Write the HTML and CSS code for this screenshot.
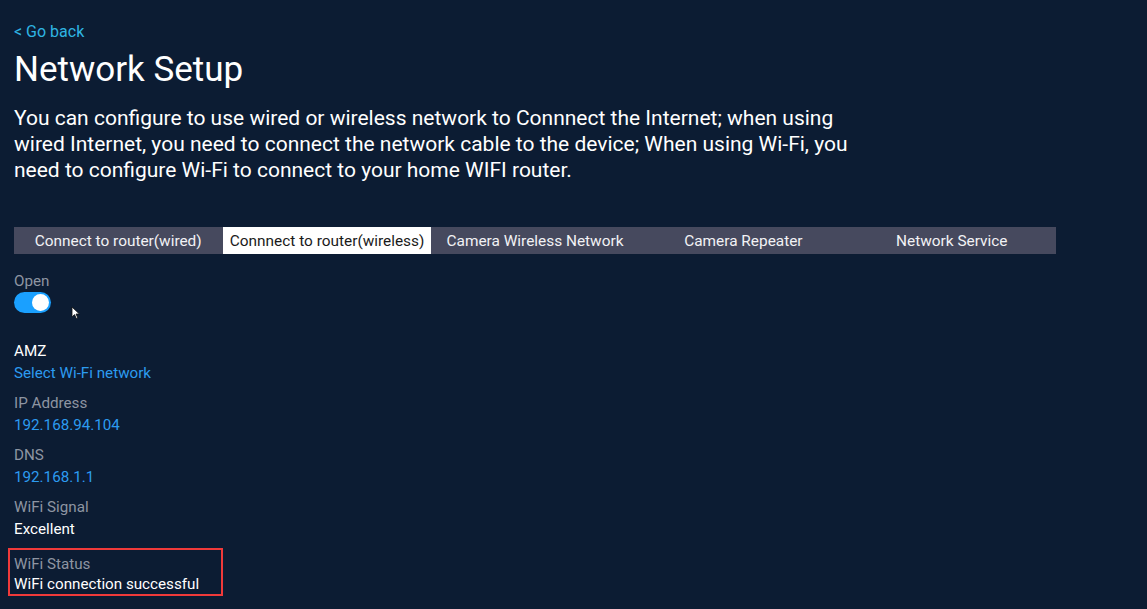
FILE: index.html
```html
<!DOCTYPE html>
<html>
<head>
<meta charset="utf-8">
<link rel="stylesheet" href="styles.css">
</head>
<body>
<div class="page">
  <a class="back">&lt; Go back</a>
  <h1 class="title">Network Setup</h1>
  <p class="intro">You can configure to use wired or wireless network to Connnect the Internet; when using wired Internet, you need to connect the network cable to the device; When using Wi-Fi, you need to configure Wi-Fi to connect to your home WIFI router.</p>
  <div class="tabs">
    <div class="tab">Connect to router(wired)</div>
    <div class="tab active">Connnect to router(wireless)</div>
    <div class="tab">Camera Wireless Network</div>
    <div class="tab">Camera Repeater</div>
    <div class="tab">Network Service</div>
  </div>
  <div class="field toggle-field">
    <div class="label">Open</div>
    <div class="toggle-row">
      <div class="toggle"><div class="knob"></div></div>
      <svg class="cursor" width="10" height="14" viewBox="0 0 10 14"><path d="M1 1 L1 11 L3.5 8.6 L5.4 12.6 L6.8 12 L5 8 L8.4 8 Z" fill="#fff" stroke="#111" stroke-width="0.8"/></svg>
    </div>
  </div>
  <div class="field">
    <div class="value white">AMZ</div>
    <div class="value blue">Select Wi-Fi network</div>
  </div>
  <div class="field">
    <div class="label">IP Address</div>
    <div class="value blue">192.168.94.104</div>
  </div>
  <div class="field">
    <div class="label">DNS</div>
    <div class="value blue">192.168.1.1</div>
  </div>
  <div class="field">
    <div class="label">WiFi Signal</div>
    <div class="value white">Excellent</div>
  </div>
  <div class="field highlight">
    <div class="label">WiFi Status</div>
    <div class="value white">WiFi connection successful</div>
  </div>
</div>
</body>
</html>
```
FILE: styles.css
```css
html, body {
  margin: 0;
  padding: 0;
  background: #0c1c33;
  height: 100%;
  overflow: hidden;
}
body {
  font-family: Roboto, "Noto Sans", sans-serif;
  color: #ffffff;
}
.page {
  padding: 21px 14px 0 14px;
}
.back {
  display: block;
  color: #2fb5e2;
  font-size: 16px;
  line-height: 22px;
}
.title {
  margin: 7px 0 0 0;
  font-size: 35px;
  font-weight: 400;
  line-height: 40px;
  color: #ffffff;
}
.intro {
  margin: 15px 0 0 0;
  font-size: 21px;
  line-height: 26px;
  max-width: 860px;
  color: #ffffff;
}
.tabs {
  margin-top: 44px;
  display: grid;
  grid-template-columns: repeat(5, 1fr);
  width: 1042px;
  height: 27px;
  background: #46495e;
}
.tab {
  display: flex;
  align-items: center;
  justify-content: center;
  font-size: 15.4px;
  color: #f2f2f5;
}
.tab.active {
  background: #ffffff;
  color: #1a1a1a;
  margin-left: 1px;
}
.field {
  display: flex;
  flex-direction: column;
  margin-top: 8px;
}
.toggle-field {
  margin-top: 16px;
}
.label {
  font-size: 15.2px;
  line-height: 22px;
  color: #8e95a2;
}
.value {
  font-size: 15.2px;
  line-height: 22px;
}
.white { color: #ffffff; }
.blue { color: #2c9bf0; }
.toggle-row {
  display: flex;
  align-items: flex-start;
  gap: 20px;
  height: 22px;
  margin-bottom: 18px;
}
.toggle {
  width: 37px;
  height: 21px;
  border-radius: 11px;
  background: #1aa0ff;
  position: relative;
}
.knob {
  position: absolute;
  right: 2px;
  top: 2px;
  width: 17px;
  height: 17px;
  border-radius: 50%;
  background: #ffffff;
}
.cursor {
  margin-top: 14px;
}
.highlight {
  width: fit-content;
  margin-left: -6px;
  margin-top: 8px;
  padding: 4px 22px 0 4px;
  border: 2px solid #f03a3a;
}
.highlight .label,
.highlight .value {
  line-height: 20px;
}
```
